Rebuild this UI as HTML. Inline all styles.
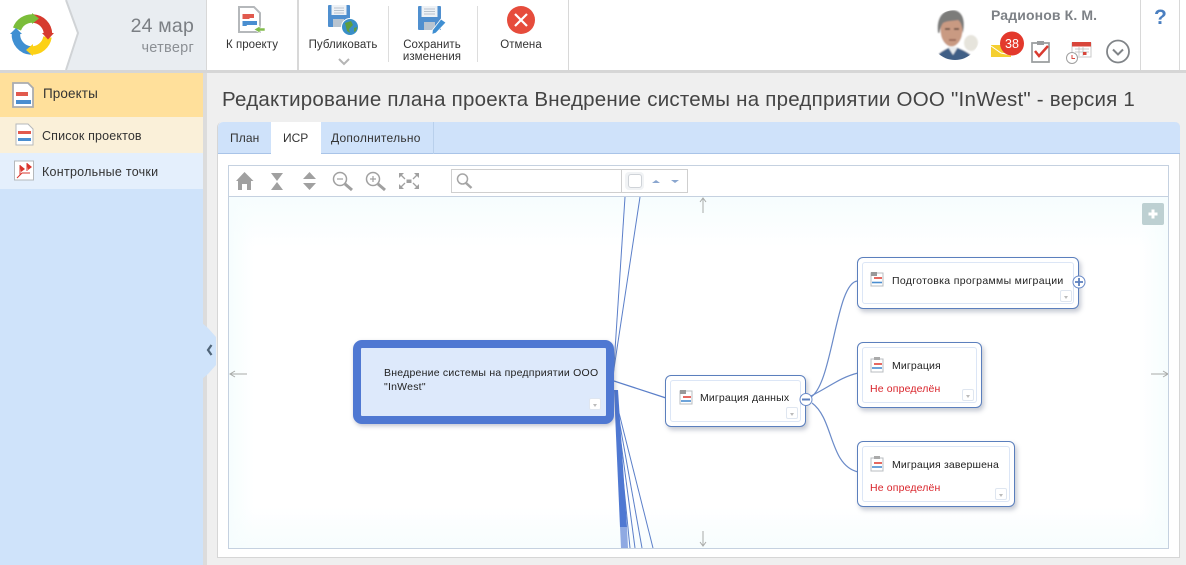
<!DOCTYPE html>
<html lang="ru"><head><meta charset="utf-8"><title>ИСР</title>
<style>
html,body{margin:0;padding:0;width:1186px;height:565px;overflow:hidden;background:#efefef;font-family:"Liberation Sans",sans-serif;color:#333}
.a{position:absolute;white-space:nowrap}
.tb{font-size:11.5px;color:#333;text-align:center;line-height:12px;letter-spacing:.05px}
.nd{position:absolute;box-sizing:border-box;background:#fff;border:1px solid #5b7fbd;border-radius:6px;box-shadow:2px 3px 5px rgba(90,100,130,.35)}
.nd:before{content:"";position:absolute;left:4px;top:4px;right:4px;bottom:4px;border:1px solid #dce6f6;border-radius:3px}
.nt{position:absolute;font-size:10.5px;color:#222;white-space:nowrap;letter-spacing:.15px}
.dd{position:absolute;width:12px;height:12px;background:#fff;border:1px solid #dfe6f0;border-radius:2px;box-sizing:border-box}
.dd:after{content:"";position:absolute;left:3px;top:5px;border:2.5px solid transparent;border-top:3px solid #bbb}
</style></head><body>

<!-- header -->
<div class="a" style="left:0;top:0;width:1186px;height:70px;background:#fff"></div>
<div class="a" style="left:0;top:70px;width:1186px;height:3px;background:#d6d6d6"></div>
<svg class="a" style="left:0;top:0" width="207" height="70">
<polygon points="66,0 206,0 206,70 66,70 78,33" fill="#e9edf1"/>
<polyline points="66,0 78,33 66,70" fill="none" stroke="#d0d3d6" stroke-width="2"/>
<rect x="206" y="0" width="1.5" height="70" fill="#d8d8d8"/>
<!-- logo -->
<g fill="none" stroke-width="8.5">
<path d="M17 29A16 16 0 0 1 33 18.500" stroke="#7bbd3a"/>
<path d="M33 18.500A16 16 0 0 1 48 34" stroke="#d63a2e"/>
<path d="M47.500 37A16 16 0 0 1 31 50.500" stroke="#fcd116"/>
<path d="M31 50.500A16 16 0 0 1 16 33" stroke="#3f8fd2"/>
</g>
<polygon points="32,13 39,18.500 32,24" fill="#7bbd3a"/>
<polygon points="42,33 54,33 48,39.500" fill="#d63a2e"/>
<polygon points="33,44 33,56 26,50" fill="#fcd116"/>
<polygon points="10,34 22,34 16,28" fill="#3f8fd2"/>
</svg>
<div class="a" style="right:992px;top:15px;font-size:19.5px;color:#7b7f84;letter-spacing:.2px">24 мар</div>
<div class="a" style="right:992px;top:40px;font-size:14.5px;color:#8b8f94;letter-spacing:.25px">четверг</div>

<!-- toolbar separators -->
<div class="a" style="left:297px;top:0;width:1.5px;height:70px;background:#d8d8d8"></div>
<div class="a" style="left:388px;top:6px;width:1px;height:56px;background:#ddd"></div>
<div class="a" style="left:477px;top:6px;width:1px;height:56px;background:#ddd"></div>
<div class="a" style="left:568px;top:0;width:1px;height:70px;background:#d8d8d8"></div>
<div class="a" style="left:1140px;top:0;width:1px;height:70px;background:#d8d8d8"></div>
<div class="a" style="left:1179px;top:0;width:1px;height:70px;background:#d8d8d8"></div>

<svg class="a" style="left:207px;top:0" width="370" height="70">
<!-- doc icon -->
<path d="M32 7H47L53 13V32H32Z" fill="#fff" stroke="#b5b8bb" stroke-width="2"/>
<path d="M35.500 14H47V18H43L42 19H35.500Z" fill="#e15a4e"/><path d="M35.500 21H50V25H40L39.500 26H35.500Z" fill="#4a8ed0"/>
<path d="M47 29.500L53 26V28H58V31H53V33Z" fill="#82bc4c" stroke="#fff" stroke-width=".6"/>
<!-- floppy globe -->
<rect x="121" y="5" width="22" height="22" rx="1" fill="#4f8fcf"/>
<rect x="124.500" y="5" width="15" height="10" fill="#eef2f6"/><path d="M127 8H137M127 10.500H137M127 13H137" stroke="#a8b4c0" stroke-width=".8"/>
<rect x="126" y="19" width="11" height="8" fill="#b8c4d0"/>
<circle cx="143" cy="27" r="8.500" fill="#3a8fc8" stroke="#fff" stroke-width="1"/><path d="M138 23L144 21L146 25L142 29L143 33L140 31ZM147 28L150 27L149 31L147 32Z" fill="#5e9d3f"/>
<path d="M132 59L137 64L142 59" fill="none" stroke="#b5b5b5" stroke-width="2"/>
<!-- floppy pen -->
<rect x="211" y="6" width="23" height="24" rx="1" fill="#4f8fcf"/>
<rect x="214.500" y="6" width="16" height="11" fill="#eef2f6"/><path d="M217 9H228M217 11.500H228M217 14H228" stroke="#a8b4c0" stroke-width=".8"/>
<rect x="217" y="22" width="11" height="8" fill="#b8c4d0"/>
<path d="M234 19L239 22.500L229 33L225 34.500L225.500 30Z" fill="#3f8fd2" stroke="#fff" stroke-width=".8"/>
<!-- cancel -->
<circle cx="314" cy="20" r="14" fill="#e64c3c"/>
<path d="M308 14L320 26M320 14L308 26" stroke="#fff" stroke-width="2.200"/>
</svg>
<div class="a tb" style="left:207px;top:39px;width:90px">К проекту</div>
<div class="a tb" style="left:298px;top:39px;width:90px">Публиковать</div>
<div class="a tb" style="left:388px;top:39px;width:88px">Сохранить<br>изменения</div>
<div class="a tb" style="left:477px;top:39px;width:88px">Отмена</div>

<!-- user -->
<svg class="a" style="left:925px;top:5px" width="210" height="60">
<defs><clipPath id="av"><circle cx="30" cy="30" r="25"/></clipPath><filter id="bl"><feGaussianBlur stdDeviation=".7"/></filter></defs>
<g clip-path="url(#av)"><g filter="url(#bl)">
<rect x="0" y="0" width="60" height="60" fill="#fff"/>
<ellipse cx="46" cy="38" rx="7" ry="8" fill="#e6e4dc"/>
<path d="M10 55C13 47 20 45 25 42L31 42C36 45 44 46 50 55V60H10Z" fill="#3f5f86"/>
<path d="M23 42L28 50L33 42Z" fill="#e8ecef"/>
<ellipse cx="26.500" cy="25" rx="11" ry="16.500" fill="#c99a82"/>
<path d="M13 28C11 14 17 5 27 5C37 5 41 14 38 28C37 21 36 17 33 15C27 16 21 16 18 18C16 21 15 24 14.500 28Z" fill="#7b7b7a"/>
<path d="M20 24H25M29 24H34" stroke="#5a4238" stroke-width="1.500"/>
<path d="M24 35H31" stroke="#8d5f50" stroke-width="1.500"/>
</g></g>
<!-- mail -->
<path d="M66 40H86V52H66Z" fill="#f5cf2f"/><path d="M66 41L76 48L86 50" fill="none" stroke="#fff" stroke-width="1"/>
<circle cx="87" cy="38.500" r="12" fill="#e3392c"/>
<text x="87" y="43" font-size="12.500" fill="#fff" text-anchor="middle" font-family="Liberation Sans">38</text>
<!-- task -->
<path d="M107 38H124V57H107Z" fill="#fff" stroke="#9a9d9f" stroke-width="1.700"/><rect x="112" y="36" width="7" height="4" fill="#9a9d9f"/>
<path d="M110 46L114 51L123 41" fill="none" stroke="#d93a30" stroke-width="2.500"/>
<!-- calendar -->
<rect x="147" y="38" width="19" height="14" fill="#fff" stroke="#c8c8c8" stroke-width="1"/><rect x="147" y="37" width="19" height="4.500" fill="#d8463b"/>
<path d="M150 44H164M150 47H164M154 42V51M158 42V51" stroke="#bbb" stroke-width=".7"/><rect x="158" y="47" width="3.500" height="3" fill="#d8463b"/>
<circle cx="147" cy="53" r="5.500" fill="#fff" stroke="#a0a0a0"/><path d="M147 50V53.500H150" stroke="#d8463b" fill="none"/>
<!-- chevron circle -->
<circle cx="193" cy="46.500" r="11" fill="#fff" stroke="#808488" stroke-width="1.800"/>
<path d="M188 44.500L193 49.500L198 44.500" fill="none" stroke="#808488" stroke-width="2"/>
</svg>
<div class="a" style="left:991px;top:7px;font-size:14px;font-weight:bold;color:#7d8186;letter-spacing:.13px">Радионов К. М.</div>
<div class="a" style="left:1154px;top:6px;font-size:21px;font-weight:bold;color:#4a7fc0">?</div>

<!-- sidebar -->
<div class="a" style="left:0;top:73px;width:203px;height:492px;background:#cfe3fa"></div>
<div class="a" style="left:0;top:73px;width:203px;height:44px;background:#ffe09b"></div>
<div class="a" style="left:0;top:117px;width:203px;height:36px;background:#faf0d9"></div>
<div class="a" style="left:0;top:153px;width:203px;height:36px;background:#e4effc"></div>
<div class="a" style="left:203px;top:73px;width:4px;height:492px;background:#dcdcdc"></div>
<svg class="a" style="left:0;top:73px" width="40" height="110">
<path d="M13 10H28L33 15V34H13Z" fill="#fff" stroke="#a9acb0" stroke-width="1.800"/>
<path d="M16 19H28V23H16Z" fill="#e15a4e"/><path d="M16 27H31V31H16Z" fill="#4a8ed0"/>
<path d="M16 51H28L33 56V72H16Z" fill="#fff" stroke="#b5b8bb"/>
<path d="M18 58H31V61H18Z" fill="#e15a4e"/><path d="M18 65H31V68H18Z" fill="#4a8ed0"/>
<rect x="14.500" y="88" width="19" height="19" fill="#fff" stroke="#b5b8bb"/>
<path d="M20 92L25 96L21 99ZM27 90L32 94L28 97Z" fill="#d9342b"/><path d="M20 92V102M27 90V98M17 105L22 100H30" fill="none" stroke="#d9342b"/>
</svg>
<div class="a" style="left:43px;top:86px;font-size:13.5px;color:#333;letter-spacing:.1px">Проекты</div>
<div class="a" style="left:42px;top:129px;font-size:12.500px;color:#333;letter-spacing:.15px">Список проектов</div>
<div class="a" style="left:42px;top:165px;font-size:12.500px;color:#333;letter-spacing:.27px">Контрольные точки</div>
<svg class="a" style="left:202px;top:323px" width="15" height="56"><path d="M0 0L6 5L14 14V42L6 51L0 56Z" fill="#cfe3fa"/><path d="M9.500 22L6 27L9.500 32" fill="none" stroke="#4f6478" stroke-width="2.200"/></svg>

<!-- title -->
<div class="a" style="left:222px;top:88px;font-size:20.500px;color:#444;letter-spacing:.235px">Редактирование плана проекта Внедрение системы на предприятии ООО "InWest" - версия 1</div>

<!-- panel -->
<div class="a" style="left:217px;top:122px;width:963px;height:436px;box-sizing:border-box;background:#fff;border:1px solid #d6d6d6;border-top:none;border-radius:5px 5px 0 0"></div>
<div class="a" style="left:218px;top:122px;width:962px;height:32px;background:#cfe2fa;border-bottom:1px solid #a9c4e8;box-sizing:border-box;border-radius:5px 5px 0 0"></div>
<div class="a" style="left:271px;top:122px;width:50px;height:33px;background:#fff"></div>
<div class="a" style="left:433px;top:122px;width:1px;height:32px;background:#b9d0ec"></div>
<div class="a" style="left:230px;top:131px;font-size:12px;color:#333;letter-spacing:.1px">План</div>
<div class="a" style="left:283px;top:131px;font-size:12px;color:#333">ИСР</div>
<div class="a" style="left:331px;top:131px;font-size:12px;color:#333;letter-spacing:.25px">Дополнительно</div>

<!-- inner -->
<div class="a" style="left:228px;top:165px;width:941px;height:384px;box-sizing:border-box;border:1px solid #c5d1e0;background:#fff"></div>
<div class="a" style="left:229px;top:196px;width:939px;height:1px;background:#c5d1e0"></div>
<div class="a" style="left:229px;top:197px;width:939px;height:351px;background:linear-gradient(180deg,#f6fdfe 0,#fff 50px,#fff 310px,#f7fdfe 351px)"></div>
<div class="a" style="left:229px;top:197px;width:939px;height:351px;background:linear-gradient(90deg,#f6fdfe 0,rgba(255,255,255,0) 25px,rgba(255,255,255,0) 910px,#f6fdfe 939px)"></div>

<!-- toolbar -->
<svg class="a" style="left:228px;top:165px" width="470" height="32" fill="#a0a0a0">
<path d="M16.500 7L25.500 16H23V25H19V19H14V25H10V16H8Z"/>
<path d="M43 8H55L49 16ZM49 17L55 25H43Z"/>
<path d="M81.500 7L88 14H75ZM75 18H88L81.500 25Z"/>
<g fill="none" stroke="#a0a0a0"><circle cx="112" cy="14" r="6.500" stroke-width="1.500"/><path d="M117 19L124 25" stroke-width="3"/><path d="M109 14H115" stroke-width="1.200"/>
<circle cx="145" cy="14" r="6.500" stroke-width="1.500"/><path d="M150 19L157 25" stroke-width="3"/><path d="M142 14H148M145 11V17" stroke-width="1.200"/>
<path d="M172 9L177 14M190 9L185 14M172 23L177 18M190 23L185 18" stroke-width="1.300"/></g>
<path d="M171 8H176L171 13ZM191 8H186L191 13ZM171 24H176L171 19ZM191 24H186L191 19Z"/><rect x="178.500" y="14.500" width="5" height="3.500"/>
</svg>
<div class="a" style="left:451px;top:169px;width:237px;height:24px;box-sizing:border-box;border:1px solid #cfcfcf;background:#fff"></div>
<div class="a" style="left:621px;top:170px;width:1px;height:22px;background:#cfcfcf"></div>
<div class="a" style="left:625px;top:172px;width:19px;height:18px;background:#f1f3f5;border-radius:4px"></div>
<div class="a" style="left:628px;top:174px;width:12px;height:12px;background:#fff;border:1px solid #cfd3d8;border-radius:3px"></div>
<svg class="a" style="left:451px;top:169px" width="237" height="24"><circle cx="11.500" cy="10" r="5" fill="none" stroke="#a5a5a5" stroke-width="1.500"/><path d="M15 14L20.500 19" stroke="#a5a5a5" stroke-width="2.500"/><path d="M201 14L205 11L209 14ZM220 11H228L224 14Z" fill="#8aa6cf"/></svg>

<!-- graph -->
<svg class="a" style="left:229px;top:197px" width="939" height="351">
<g fill="none" stroke="#5b7fc9" stroke-width="1">
<path d="M384 184L396 0"/><path d="M384 178L411 0"/>
<path d="M385 184L437 201" stroke-width="1.200"/>
<path d="M386 200L424 351"/><path d="M386 200L413 351"/><path d="M386 200L406 351"/><path d="M386 200L401 351"/><path d="M386 200L398 351"/>
</g>
<path d="M385 193L389 193L398 330L391 330Z" fill="#4f78d2"/>
<path d="M391 330H398L399 351H392Z" fill="#8fa9e2"/>
<!-- arrows -->
<g fill="none" stroke="#a8aaa8" stroke-width="1">
<path d="M474 16V2M471 5L474 1L477 5"/><path d="M474 334V348M471 345L474 349L477 345"/>
<path d="M18 177H2M6 174L1 177L6 180"/><path d="M922 177H938M934 174L939 177L934 180"/>
</g>
<rect x="913" y="6" width="22" height="22" rx="2" fill="#bdd0d2"/><path d="M924 12.500V21.500M919.500 17H928.500" stroke="#fff" stroke-width="3"/>
<!-- links -->
<g fill="none" stroke="#6a8ac8" stroke-width="1.200">
<path d="M580 201C604 192 606 84 629 84"/><path d="M582 199C600 190 612 180 629 176"/><path d="M583 206C605 222 600 268 629 275"/>
</g>
</svg>

<!-- root -->
<div class="a" style="left:353px;top:340px;width:261px;height:84px;box-sizing:border-box;background:#dde9fb;border:8px solid #4f78d2;border-radius:9px;box-shadow:1px 2px 4px rgba(80,90,120,.35)"></div>
<div class="nt" style="left:384px;top:366px;line-height:14px;letter-spacing:.23px">Внедрение системы на предприятии ООО<br>"InWest"</div>
<div class="dd" style="left:589px;top:398px"></div>

<!-- nodes -->
<div class="nd" style="left:665px;top:375px;width:141px;height:52px"><div class="dd" style="left:120px;top:31px"></div></div>
<div class="nt" style="left:700px;top:392px">Миграция данных</div>
<div class="nd" style="left:857px;top:257px;width:222px;height:52px"><div class="dd" style="left:202px;top:32px"></div></div>
<div class="nt" style="left:892px;top:275px;letter-spacing:.32px">Подготовка программы миграции</div>
<div class="nd" style="left:857px;top:342px;width:125px;height:66px"><div class="dd" style="left:104px;top:46px"></div></div>
<div class="nt" style="left:892px;top:360px">Миграция</div>
<div class="a" style="left:870px;top:383px;font-size:10.500px;color:#d9232a;letter-spacing:.15px">Не определён</div>
<div class="nd" style="left:857px;top:441px;width:158px;height:66px"><div class="dd" style="left:137px;top:46px"></div></div>
<div class="nt" style="left:892px;top:459px">Миграция завершена</div>
<div class="a" style="left:870px;top:482px;font-size:10.500px;color:#d9232a;letter-spacing:.15px">Не определён</div>

<!-- node icons & toggles -->
<svg class="a" style="left:660px;top:250px" width="430" height="240">
<g><rect x="20" y="141" width="12" height="13" fill="#fff" stroke="#b8bcc0"/><rect x="20" y="140" width="6" height="4" fill="#999"/><path d="M23 147H31" stroke="#e0443a" stroke-width="1.600"/><path d="M21 151H31" stroke="#4a8ed0" stroke-width="1.600"/></g>
<g><rect x="211" y="23" width="12" height="13" fill="#fff" stroke="#b8bcc0"/><rect x="211" y="22" width="6" height="4" fill="#999"/><path d="M214 28H222" stroke="#e0443a" stroke-width="1.600"/><path d="M212 32.500H222" stroke="#4a8ed0" stroke-width="1.600"/></g>
<g><rect x="211" y="109" width="12" height="13" fill="#fff" stroke="#b8bcc0"/><rect x="214" y="107" width="6" height="3" fill="#aaa"/><path d="M214 114H222" stroke="#e0443a" stroke-width="1.600"/><path d="M212 118H222" stroke="#4a8ed0" stroke-width="1.600"/></g>
<g><rect x="211" y="208" width="12" height="13" fill="#fff" stroke="#b8bcc0"/><rect x="214" y="206" width="6" height="3" fill="#aaa"/><path d="M214 213H222" stroke="#e0443a" stroke-width="1.600"/><path d="M212 217H222" stroke="#4a8ed0" stroke-width="1.600"/></g>
<circle cx="146" cy="149.500" r="6" fill="#fff" stroke="#6a8ac8"/><path d="M142 149.500H150" stroke="#5b7fbd" stroke-width="2"/>
<circle cx="419" cy="32" r="6" fill="#fff" stroke="#6a8ac8"/><path d="M415 32H423M419 28V36" stroke="#5b7fbd" stroke-width="1.800"/>
</svg>
</body></html>
